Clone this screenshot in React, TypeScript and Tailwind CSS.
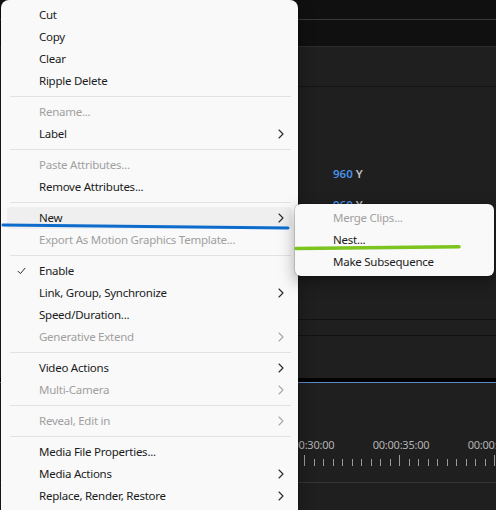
import React from "react";

type Item =
  | { sep: true }
  | { label: string; disabled?: boolean; sub?: boolean; check?: boolean; hover?: boolean };

const MAIN: Item[] = [
  { label: "Cut" },
  { label: "Copy" },
  { label: "Clear" },
  { label: "Ripple Delete" },
  { sep: true },
  { label: "Rename...", disabled: true },
  { label: "Label", sub: true },
  { sep: true },
  { label: "Paste Attributes...", disabled: true },
  { label: "Remove Attributes..." },
  { sep: true },
  { label: "New", sub: true, hover: true },
  { label: "Export As Motion Graphics Template...", disabled: true },
  { sep: true },
  { label: "Enable", check: true },
  { label: "Link, Group, Synchronize", sub: true },
  { label: "Speed/Duration..." },
  { label: "Generative Extend", sub: true, disabled: true },
  { sep: true },
  { label: "Video Actions", sub: true },
  { label: "Multi-Camera", sub: true, disabled: true },
  { sep: true },
  { label: "Reveal, Edit in", sub: true, disabled: true },
  { sep: true },
  { label: "Media File Properties..." },
  { label: "Media Actions", sub: true },
  { label: "Replace, Render, Restore", sub: true },
];

const SUB: Item[] = [
  { label: "Merge Clips...", disabled: true },
  { label: "Nest..." },
  { label: "Make Subsequence" },
];

function Chevron({ disabled }: { disabled?: boolean }) {
  return (
    <svg width="6" height="10" viewBox="0 0 6 10" className="shrink-0">
      <path
        d="M1 1 L5 5 L1 9"
        fill="none"
        stroke={disabled ? "#a8a8a8" : "#2a2a2a"}
        strokeWidth="1.1"
        strokeLinecap="round"
        strokeLinejoin="round"
      />
    </svg>
  );
}

function Check() {
  return (
    <svg width="9" height="8" viewBox="0 0 9 8">
      <path d="M1 4.2 L3.4 6.6 L8 1.2" fill="none" stroke="#2a2a2a" strokeWidth="1" strokeLinecap="round" />
    </svg>
  );
}

function MenuRows({ items }: { items: Item[] }) {
  return (
    <>
      {items.map((it, i) =>
        "sep" in it ? (
          <div key={i} className="my-[4px] ml-[3px] mr-[1px] h-px bg-[#e2e2e2]" />
        ) : (
          <div
            key={i}
            className={`flex h-[22px] items-center rounded-[4px] pr-[8px] ${it.hover ? "bg-[#efefef]" : ""}`}
          >
            <span className="flex w-[32px] shrink-0 items-center pl-[10px]">{it.check && <Check />}</span>
            <span className={`flex-1 whitespace-nowrap ${it.disabled ? "text-[#a0a0a0]" : "text-[#1b1b1b]"}`}>
              {it.label}
            </span>
            {it.sub && <Chevron disabled={it.disabled} />}
          </div>
        )
      )}
    </>
  );
}

function Ruler() {
  const majors = [304, 399, 494];
  const labels = ["00:00:30:00", "00:00:35:00", "00:00:40:00"];
  const ticks: number[] = [];
  for (let x = 304 - 9.5 * 10; x < 500; x += 9.5) ticks.push(x);
  return (
    <svg width="496" height="30" className="block">
      {labels.map((l, i) => (
        <text key={l} x={majors[i] + 2} y="11" textAnchor="middle" fontSize="11" fill="#b3b3b3" fontFamily="Noto Sans, sans-serif">
          {l}
        </text>
      ))}
      {ticks.map((x, i) => {
        const major = i % 10 === 0;
        return (
          <line
            key={i}
            x1={Math.round(x) + 0.5}
            x2={Math.round(x) + 0.5}
            y1={major ? 17 : 21}
            y2={28}
            stroke="#9a9a9a"
            strokeWidth="1"
          />
        );
      })}
    </svg>
  );
}

export default function App() {
  return (
    <div className="relative h-[510px] w-[496px] overflow-hidden bg-[#1f1f1f] font-['Noto_Sans','Open_Sans',sans-serif] text-[11.5px] tracking-[-0.25px]">
      {/* dark app behind the menus */}
      <div className="flex flex-col">
        <div className="h-[19px] bg-[#101010]" />
        <div className="h-px bg-[#3a3a3a]" />
        <div className="h-[26px] bg-[#101010]" />
        <div className="h-px bg-[#2c2c2c]" />
        <div className="h-[39px] bg-[#1f1f1f]" />
        <div className="h-px bg-[#141414]" />
        <div className="flex h-[232px] flex-col gap-[14px] pl-[333px] pt-[78px] text-[11.5px] font-semibold tracking-normal">
          <div>
            <span className="text-[#4a90e6]">960</span> <span className="text-[#bdbdbd]">Y</span>
          </div>
          <div>
            <span className="text-[#4a90e6]">960</span> <span className="text-[#bdbdbd]">Y</span>
          </div>
        </div>
        <div className="h-px bg-[#121212]" />
        <div className="h-[15px]" />
        <div className="h-px bg-[#121212]" />
        <div className="h-[42px]" />
        <div className="h-[4px] bg-black" />
        <div className="h-px bg-[#5a8cc8]" />
        <div className="pt-[55px]">
          <Ruler />
        </div>
        <div className="mt-[14px] h-px bg-[#363636]" />
      </div>

      {/* main context menu */}
      <div className="absolute left-[1px] top-0 h-[530px] w-[297px] rounded-lg bg-[#f9f9f9] px-[6px] py-[4px] shadow-[0_0_0_1px_rgba(0,0,0,0.15),0_6px_16px_rgba(0,0,0,0.35)]">
        <MenuRows items={MAIN} />
      </div>

      {/* New submenu */}
      <div className="absolute left-[295px] top-[204px] w-[199px] rounded-md bg-[#f9f9f9] px-[6px] py-[3px] shadow-[0_0_0_1px_rgba(0,0,0,0.12),0_6px_16px_rgba(0,0,0,0.35)]">
        <MenuRows items={SUB} />
      </div>

      {/* hand-drawn highlight strokes */}
      <svg className="pointer-events-none absolute left-0 top-0" width="496" height="510">
        <path d="M3 225 Q150 226.5 288 228" fill="none" stroke="#0d6bcc" strokeWidth="3" strokeLinecap="round" />
        <path d="M296 248.5 Q380 247.8 459 246.8" fill="none" stroke="#7cc41f" strokeWidth="3.5" strokeLinecap="round" />
      </svg>
    </div>
  );
}
